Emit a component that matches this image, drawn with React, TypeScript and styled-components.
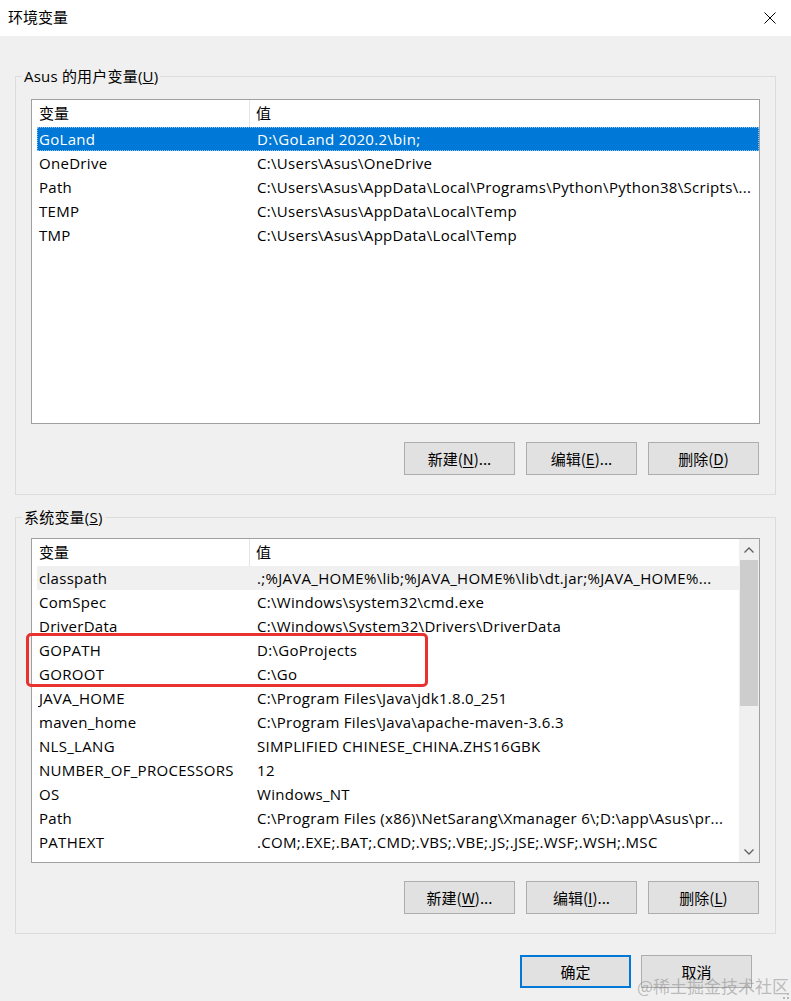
import React from "react";
import styled, { createGlobalStyle } from "styled-components";

const GlobalStyle = createGlobalStyle`
  html, body {
    margin: 0;
    padding: 0;
    background: #f0f0f0;
  }
  body {
    font-family: "Open Sans", "Noto Sans CJK SC", sans-serif;
    font-size: 15px;
    color: #000;
  }
`;

type Item = { name: string; value: string };

const userVars: Item[] = [
  { name: "GoLand", value: "D:\\GoLand 2020.2\\bin;" },
  { name: "OneDrive", value: "C:\\Users\\Asus\\OneDrive" },
  { name: "Path", value: "C:\\Users\\Asus\\AppData\\Local\\Programs\\Python\\Python38\\Scripts\\..." },
  { name: "TEMP", value: "C:\\Users\\Asus\\AppData\\Local\\Temp" },
  { name: "TMP", value: "C:\\Users\\Asus\\AppData\\Local\\Temp" },
];

const sysVars: Item[] = [
  { name: "classpath", value: ".;%JAVA_HOME%\\lib;%JAVA_HOME%\\lib\\dt.jar;%JAVA_HOME%..." },
  { name: "ComSpec", value: "C:\\Windows\\system32\\cmd.exe" },
  { name: "DriverData", value: "C:\\Windows\\System32\\Drivers\\DriverData" },
  { name: "GOPATH", value: "D:\\GoProjects" },
  { name: "GOROOT", value: "C:\\Go" },
  { name: "JAVA_HOME", value: "C:\\Program Files\\Java\\jdk1.8.0_251" },
  { name: "maven_home", value: "C:\\Program Files\\Java\\apache-maven-3.6.3" },
  { name: "NLS_LANG", value: "SIMPLIFIED CHINESE_CHINA.ZHS16GBK" },
  { name: "NUMBER_OF_PROCESSORS", value: "12" },
  { name: "OS", value: "Windows_NT" },
  { name: "Path", value: "C:\\Program Files (x86)\\NetSarang\\Xmanager 6\\;D:\\app\\Asus\\pr..." },
  { name: "PATHEXT", value: ".COM;.EXE;.BAT;.CMD;.VBS;.VBE;.JS;.JSE;.WSF;.WSH;.MSC" },
];

const App = () => {
  return (
    <Window>
      <GlobalStyle />
      <TitleBar>
        <Title>环境变量</Title>
        <CloseButton>
          <svg width="12" height="12" viewBox="0 0 12 12">
            <path d="M0.5 0.5 L11.5 11.5 M11.5 0.5 L0.5 11.5" stroke="#000" strokeWidth="1" />
          </svg>
        </CloseButton>
      </TitleBar>

      <Body>
        <Group $top={13}>
          <Legend>
            Asus 的用户变量(<u>U</u>)
          </Legend>
          <ListView>
            <ListContent>
              <Header>
                <HeadCell $first>变量</HeadCell>
                <HeadCell>值</HeadCell>
              </Header>
              {userVars.map((v, i) => (
                <Row key={v.name} $state={i === 0 ? "selected" : "none"}>
                  <NameCell>{v.name}</NameCell>
                  <ValueCell>{v.value}</ValueCell>
                </Row>
              ))}
            </ListContent>
          </ListView>
          <ButtonRow>
            <Button>
              新建(<u>N</u>)...
            </Button>
            <Button>
              编辑(<u>E</u>)...
            </Button>
            <Button>
              删除(<u>D</u>)
            </Button>
          </ButtonRow>
        </Group>

        <Group $top={11} $gap={12}>
          <Legend>
            系统变量(<u>S</u>)
          </Legend>
          <ListView>
            <ListContent>
              <Header>
                <HeadCell $first>变量</HeadCell>
                <HeadCell>值</HeadCell>
              </Header>
              {sysVars.map((v, i) => (
                <Row key={v.name + i} $state={i === 0 ? "hover" : "none"}>
                  <NameCell>{v.name}</NameCell>
                  <ValueCell>{v.value}</ValueCell>
                </Row>
              ))}
            </ListContent>
            <ScrollBar>
              <ScrollArrow>
                <svg width="10" height="6" viewBox="0 0 10 6">
                  <path d="M0.5 5.5 L5 1 L9.5 5.5" fill="none" stroke="#606060" strokeWidth="1.3" />
                </svg>
              </ScrollArrow>
              <Track>
                <Thumb />
              </Track>
              <ScrollArrow>
                <svg width="10" height="6" viewBox="0 0 10 6">
                  <path d="M0.5 0.5 L5 5 L9.5 0.5" fill="none" stroke="#606060" strokeWidth="1.3" />
                </svg>
              </ScrollArrow>
            </ScrollBar>
            <Highlight />
          </ListView>
          <ButtonRow>
            <Button>
              新建(<u>W</u>)...
            </Button>
            <Button>
              编辑(<u>I</u>)...
            </Button>
            <Button>
              删除(<u>L</u>)
            </Button>
          </ButtonRow>
        </Group>

        <Footer>
          <Button $primary>确定</Button>
          <Button>取消</Button>
        </Footer>
      </Body>

      <Watermark>@稀土掘金技术社区</Watermark>
      <Grip>
        <svg width="6" height="6" viewBox="0 0 6 6">
          <rect x="4" y="0" width="2" height="2" fill="#b8b8b8" />
          <rect x="0" y="4" width="2" height="2" fill="#b8b8b8" />
          <rect x="4" y="4" width="2" height="2" fill="#b8b8b8" />
        </svg>
      </Grip>
    </Window>
  );
};

const Window = styled.div`
  position: relative;
  width: 791px;
  height: 1001px;
  overflow: hidden;
  background: #f0f0f0;
`;

const TitleBar = styled.div`
  height: 36px;
  background: #fff;
  display: flex;
  align-items: center;
  justify-content: space-between;
  padding: 0 15px 0 8px;
`;

const Title = styled.div`
  font-size: 15px;
  line-height: 20px;
  font-family: "Noto Sans CJK SC", sans-serif;
  margin-top: -2px;
`;

const CloseButton = styled.div`
  width: 12px;
  height: 12px;
  display: flex;
  margin-top: -1px;
`;

const Body = styled.div`
  padding: 30px 15px 0 15px;
`;

const Group = styled.fieldset<{ $top: number; $gap?: number }>`
  margin: ${(p) => p.$gap ?? 0}px 0 0 0;
  padding: ${(p) => p.$top}px 15px 19px 15px;
  border: 1px solid #dcdcdc;
  min-inline-size: 0;
`;

const Legend = styled.legend`
  padding: 0 2px;
  margin-left: -9px;
  line-height: 20px;
  height: 20px;
  font-size: 15px;
  letter-spacing: 0.2px;
`;

const ListView = styled.div`
  position: relative;
  height: 325px;
  box-sizing: border-box;
  border: 1px solid #a0a0a0;
  background: #fff;
  display: flex;
`;

const ListContent = styled.div`
  flex: 1;
  min-width: 0;
  display: flex;
  flex-direction: column;
`;

const Header = styled.div`
  height: 27px;
  display: grid;
  grid-template-columns: 218px 1fr;
  flex-shrink: 0;
`;

const HeadCell = styled.div<{ $first?: boolean }>`
  line-height: 27px;
  padding-left: ${(p) => (p.$first ? 7 : 6)}px;
  border-right: ${(p) => (p.$first ? "1px solid #e5e5e5" : "none")};
  margin-bottom: 1px;
`;

const Row = styled.div<{ $state: "selected" | "hover" | "none" }>`
  height: 24px;
  box-sizing: border-box;
  margin-left: 5px;
  display: grid;
  grid-template-columns: 219px 1fr;
  line-height: 22px;
  white-space: nowrap;
  letter-spacing: 0.3px;
  background: ${(p) =>
    p.$state === "selected" ? "#0078d7" : p.$state === "hover" ? "#f0f0f0" : "transparent"};
  color: ${(p) => (p.$state === "selected" ? "#fff" : "#000")};
  border: 1px ${(p) => (p.$state === "selected" ? "dotted #8fc1ea" : "solid transparent")};
`;

const NameCell = styled.div`
  padding-left: 1px;
  overflow: hidden;
`;

const ValueCell = styled.div`
  overflow: hidden;
  padding-right: 4px;
`;

const ScrollBar = styled.div`
  width: 20px;
  flex-shrink: 0;
  background: #f0f0f0;
  display: flex;
  flex-direction: column;
`;

const ScrollArrow = styled.div`
  height: 21px;
  display: flex;
  align-items: center;
  justify-content: center;
  flex-shrink: 0;
`;

const Track = styled.div`
  flex: 1;
  padding: 0 1px;
`;

const Thumb = styled.div`
  height: 146px;
  background: #cdcdcd;
`;

const Highlight = styled.div`
  position: absolute;
  left: -6px;
  top: 94px;
  width: 402px;
  height: 54px;
  box-sizing: border-box;
  border: 3px solid #e8322f;
  border-radius: 5px;
  pointer-events: none;
`;

const ButtonRow = styled.div`
  display: flex;
  justify-content: flex-end;
  gap: 11px;
  margin-top: 18px;
  padding-right: 1px;
`;

const Button = styled.div<{ $primary?: boolean }>`
  width: 111px;
  height: 33px;
  box-sizing: border-box;
  background: #e1e1e1;
  border: ${(p) => (p.$primary ? "2px solid #0078d7" : "1px solid #adadad")};
  display: flex;
  align-items: center;
  justify-content: center;
  font-size: 15px;
  font-family: "Noto Sans CJK SC", sans-serif;
  u {
    text-underline-offset: 2px;
  }
`;

const Footer = styled.div`
  display: flex;
  justify-content: flex-end;
  gap: 10px;
  margin-top: 21px;
  padding-right: 24px;
`;

const Watermark = styled.div`
  position: absolute;
  left: 637px;
  top: 976px;
  font-size: 17px;
  line-height: 20px;
  font-family: "Noto Sans CJK SC", sans-serif;
  color: rgba(140, 140, 140, 0.55);
  white-space: nowrap;
`;

const Grip = styled.div`
  position: absolute;
  right: 2px;
  bottom: 2px;
  width: 6px;
  height: 6px;
  display: flex;
`;

export default App;
